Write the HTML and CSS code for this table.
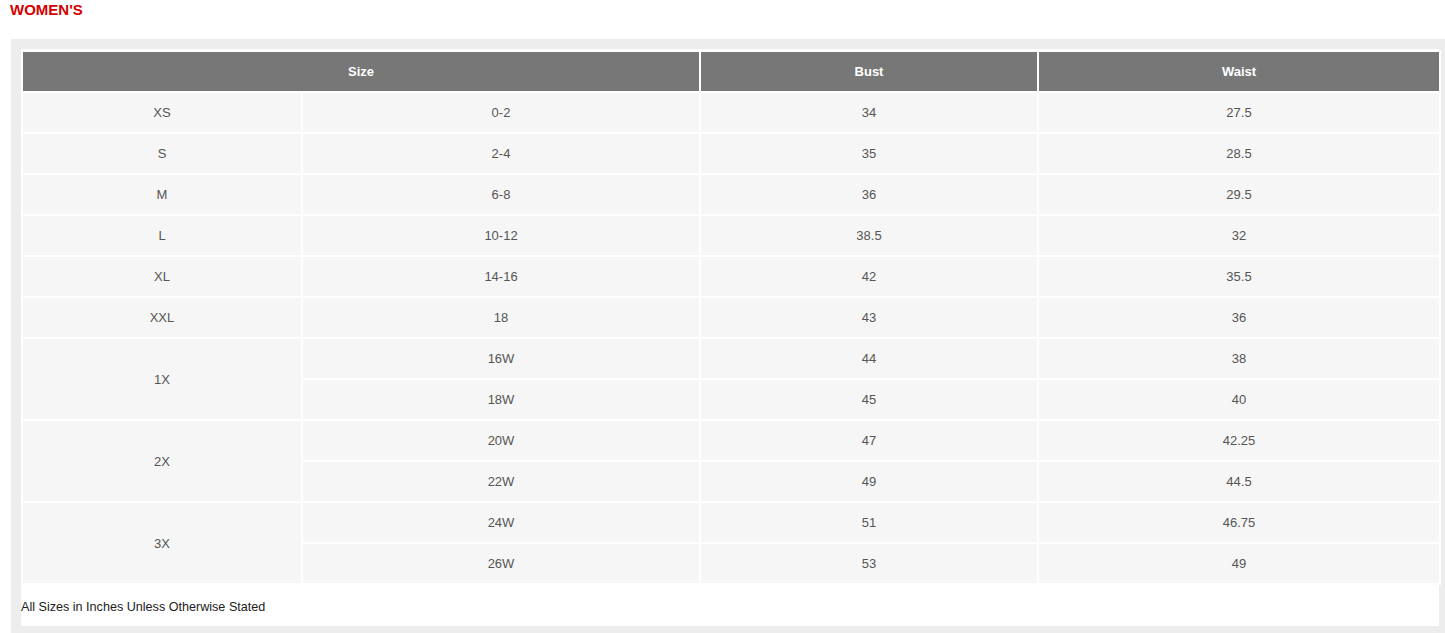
FILE: index.html
```html
<!DOCTYPE html>
<html>
<head>
<meta charset="utf-8">
<link rel="stylesheet" href="styles.css">
</head>
<body>
<h2 class="title">WOMEN'S</h2>
<div class="panel">
  <div class="sheet">
    <table class="chart">
      <colgroup>
        <col class="w1"><col class="w2"><col class="w3"><col class="w4">
      </colgroup>
      <thead>
        <tr><th colspan="2">Size</th><th>Bust</th><th>Waist</th></tr>
      </thead>
      <tbody>
        <tr><td>XS</td><td>0-2</td><td>34</td><td>27.5</td></tr>
        <tr><td>S</td><td>2-4</td><td>35</td><td>28.5</td></tr>
        <tr><td>M</td><td>6-8</td><td>36</td><td>29.5</td></tr>
        <tr><td>L</td><td>10-12</td><td>38.5</td><td>32</td></tr>
        <tr><td>XL</td><td>14-16</td><td>42</td><td>35.5</td></tr>
        <tr><td>XXL</td><td>18</td><td>43</td><td>36</td></tr>
        <tr><td rowspan="2">1X</td><td>16W</td><td>44</td><td>38</td></tr>
        <tr><td>18W</td><td>45</td><td>40</td></tr>
        <tr><td rowspan="2">2X</td><td>20W</td><td>47</td><td>42.25</td></tr>
        <tr><td>22W</td><td>49</td><td>44.5</td></tr>
        <tr><td rowspan="2">3X</td><td>24W</td><td>51</td><td>46.75</td></tr>
        <tr><td>26W</td><td>53</td><td>49</td></tr>
      </tbody>
    </table>
    <p class="note">All Sizes in Inches Unless Otherwise Stated</p>
  </div>
</div>
</body>
</html>
```
FILE: styles.css
```css
html, body {
  margin: 0;
  padding: 0;
  background: #fff;
  overflow: hidden;
  font-family: "Liberation Sans", Arial, sans-serif;
}
.title {
  margin: 0;
  padding: 1px 0 0 10px;
  height: 39px;
  box-sizing: border-box;
  font-size: 15px;
  font-weight: bold;
  color: #d40000;
  line-height: 17px;
}
.panel {
  margin-left: 11px;
  width: 1438px;
  background: #ededed;
  padding: 10px 10px 7px 10px;
}
.sheet {
  background: #fff;
  width: 1418px;
  height: 577px;
  padding-top: 1px;
  box-sizing: border-box;
}
.chart {
  border-collapse: collapse;
  width: 1418px;
  table-layout: fixed;
}
.w1 { width: 280px; }
.w2 { width: 398px; }
.w3 { width: 338px; }
.w4 { width: 402px; }
.chart th, .chart td {
  border: 2px solid #fff;
  text-align: center;
  font-size: 13px;
  padding: 0;
}
.chart th {
  background: #777;
  color: #fff;
  font-weight: bold;
  height: 39px;
}
.chart td {
  background: #f6f6f6;
  color: #555;
  height: 39px;
}
.note {
  margin: 14px 0 0 0;
  font-size: 12.6px;
  color: #222;
  line-height: 16px;
}
```
